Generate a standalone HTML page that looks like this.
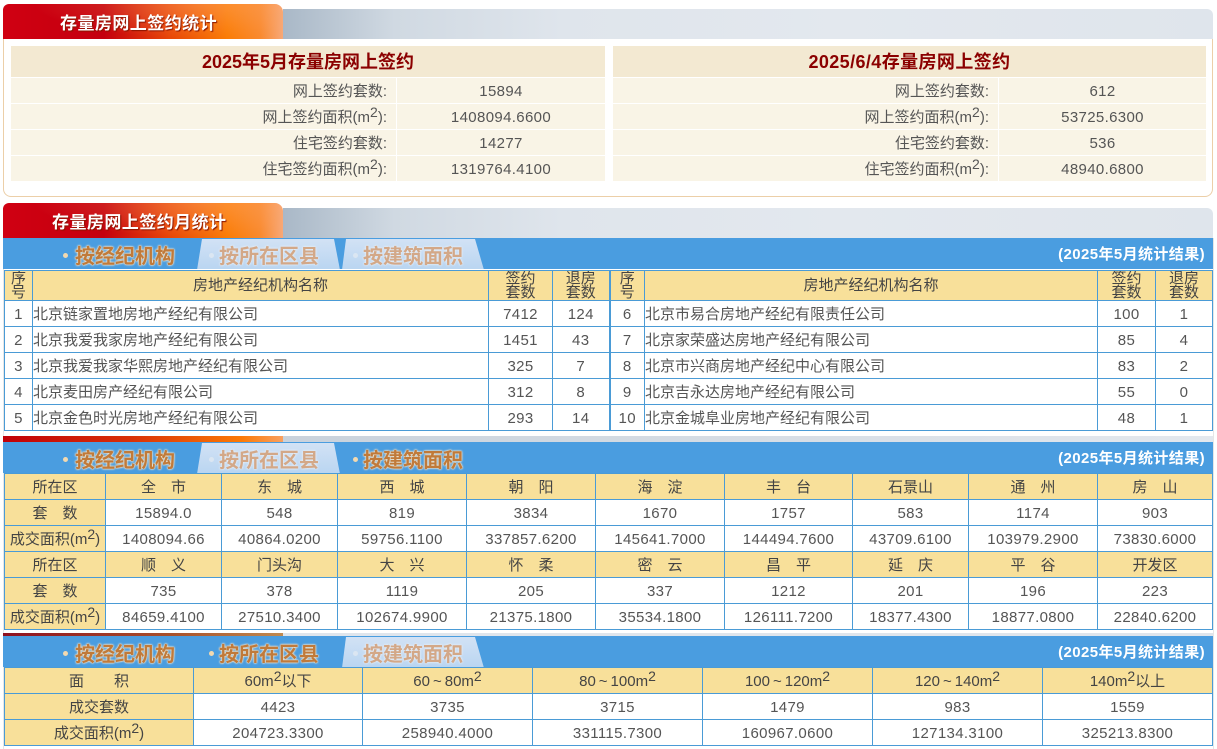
<!DOCTYPE html>
<html lang="zh"><head><meta charset="utf-8"><title>存量房网上签约统计</title>
<style>
html,body{margin:0;padding:0;background:#fff;}
body{width:1217px;height:749px;position:relative;overflow:hidden;font-family:"Liberation Sans","Noto Sans CJK SC",sans-serif;font-size:15px;color:#555;}
.a{position:absolute;}
.grey{left:283px;width:930px;background:linear-gradient(90deg,#a9b8c7 0,#d0d9e2 12%,#dfe5ec 30%,#e3e8ee 60%,#dfe5ec 100%);border-top-right-radius:6px;}
.red{left:3px;width:280px;background:radial-gradient(ellipse 170px 34px at 72% 0,rgba(255,170,110,.42),rgba(255,170,110,0)),linear-gradient(90deg,#d00012 0,#c4000e 36%,#e84808 60%,#fa7c06 80%,#f98a30 92%,#f7a878 100%);border-top-left-radius:6px;border-top-right-radius:8px;}
.h{color:#fff;font-weight:bold;font-size:17px;letter-spacing:.45px;line-height:20px;white-space:nowrap;font-family:"Noto Sans CJK SC",sans-serif;text-shadow:1px 1px 1px #8a1500;}
.box{left:3px;top:39px;width:1208px;height:157px;border:1px solid #eccfa8;border-top:0;border-radius:0 0 8px 8px;background:#fff;}
.tt{height:31px;background:#f3e9d2;text-align:center;color:#8b0000;font:bold 18px/33px "Liberation Sans","Noto Sans CJK SC",sans-serif;}
.l,.v{height:25px;line-height:27px;background:#f9f4e6;white-space:nowrap;overflow:hidden;}
.l{text-align:right;padding-right:9px;box-sizing:border-box;}
.v{text-align:center;letter-spacing:.35px;}
sup{font-size:14px;line-height:0;vertical-align:5px;}
.bar{left:3px;width:1210px;height:31px;background:#4a9de0;}
.tab{top:1px;height:30px;}
.tab polygon{fill:url(#g);}
.tx{top:1px;line-height:32px;font-weight:bold;font-size:20px;white-space:nowrap;color:#c07a3a;font-family:"Noto Sans CJK SC",sans-serif;text-shadow:0 0 2px #f3e4cc,0 0 2px #f3e4cc,0 0 1px #f3e4cc;}
.f{color:#d3a888;text-shadow:0 0 2px #e7eef6,0 0 2px #e7eef6;}
.dot{top:15px;width:5px;height:5px;border-radius:50%;background:#f2d9b0;}
.d2{background:#dbe6f2;}
.res{right:8px;top:0;color:#fff;font:bold 15px/33px "Liberation Sans","Noto Sans CJK SC",sans-serif;letter-spacing:.4px;white-space:nowrap;}
table{position:absolute;border-collapse:collapse;table-layout:fixed;background:#fff;}
td{border:1px solid #4a9bd6;padding:2px 0 0;text-align:center;height:23px;line-height:22px;letter-spacing:.35px;white-space:nowrap;overflow:hidden;}
table.t3 tr:nth-child(-n+3) td{padding-top:3px;height:22px;}
tr.y td,td.y{background:#f8e09a;color:#444;letter-spacing:0;}
td.n{text-align:left;letter-spacing:0;}
tr.hh td{line-height:14px;height:29px;padding:0;}
td.m{border-right:2px solid #4a9bd6;}
.vl{width:1px;background:#e6e6e6;top:238px;height:511px;}
</style></head><body>
<svg width="0" height="0" style="position:absolute"><defs><linearGradient id="g" x1="0" y1="0" x2="0" y2="1"><stop offset="0" stop-color="#d2e2f5"/><stop offset="1" stop-color="#b9d5f1"/></linearGradient></defs></svg>

<div class="a grey" style="top:9px;height:30px"></div>
<div class="a red" style="top:4px;height:35px"></div>
<div class="a h" style="left:60px;top:12px">存量房网上签约统计</div>
<div class="a box"></div>

<div class="a tt" style="left:11px;top:46px;width:594px">2025年5月存量房网上签约</div>
<div class="a l" style="left:11px;top:78px;width:385px">网上签约套数:</div><div class="a v" style="left:397px;top:78px;width:208px">15894</div>
<div class="a l" style="left:11px;top:104px;width:385px">网上签约面积(m<sup>2</sup>):</div><div class="a v" style="left:397px;top:104px;width:208px">1408094.6600</div>
<div class="a l" style="left:11px;top:130px;width:385px">住宅签约套数:</div><div class="a v" style="left:397px;top:130px;width:208px">14277</div>
<div class="a l" style="left:11px;top:156px;width:385px">住宅签约面积(m<sup>2</sup>):</div><div class="a v" style="left:397px;top:156px;width:208px">1319764.4100</div>

<div class="a tt" style="left:613px;top:46px;width:593px;letter-spacing:.4px">2025/6/4存量房网上签约</div>
<div class="a l" style="left:613px;top:78px;width:385px">网上签约套数:</div><div class="a v" style="left:999px;top:78px;width:207px">612</div>
<div class="a l" style="left:613px;top:104px;width:385px">网上签约面积(m<sup>2</sup>):</div><div class="a v" style="left:999px;top:104px;width:207px">53725.6300</div>
<div class="a l" style="left:613px;top:130px;width:385px">住宅签约套数:</div><div class="a v" style="left:999px;top:130px;width:207px">536</div>
<div class="a l" style="left:613px;top:156px;width:385px">住宅签约面积(m<sup>2</sup>):</div><div class="a v" style="left:999px;top:156px;width:207px">48940.6800</div>

<div class="a vl" style="left:3px"></div><div class="a vl" style="left:1213px"></div>

<div class="a grey" style="top:208px;height:30px"></div>
<div class="a red" style="top:203px;height:35px"></div>
<div class="a h" style="left:52px;top:211px">存量房网上签约月统计</div>

<div class="a bar" style="top:238px">
<svg class="a tab" style="left:194px" width="146" height="31"><polygon points="0,31 5,0 137,0 143,31"/></svg>
<svg class="a tab" style="left:339px" width="146" height="31"><polygon points="0,31 4,0 133,0 142,31"/></svg>
<div class="a dot" style="left:60px"></div><div class="a tx" style="left:72px">按经纪机构</div>
<div class="a dot d2" style="left:206px"></div><div class="a tx f" style="left:216px">按所在区县</div>
<div class="a dot d2" style="left:350px"></div><div class="a tx f" style="left:360px">按建筑面积</div>
<div class="a res">(2025年5月统计结果)</div></div>

<table style="left:4px;top:270px;width:1208px">
<colgroup><col style="width:28px"><col style="width:456px"><col style="width:64px"><col style="width:57px"><col style="width:35px"><col style="width:453px"><col style="width:58px"><col style="width:57px"></colgroup>
<tr class="y hh"><td>序<br>号</td><td>房地产经纪机构名称</td><td>签约<br>套数</td><td class="m">退房<br>套数</td><td>序<br>号</td><td>房地产经纪机构名称</td><td>签约<br>套数</td><td>退房<br>套数</td></tr>
<tr><td>1</td><td class="n">北京链家置地房地产经纪有限公司</td><td>7412</td><td class="m">124</td><td>6</td><td class="n">北京市易合房地产经纪有限责任公司</td><td>100</td><td>1</td></tr>
<tr><td>2</td><td class="n">北京我爱我家房地产经纪有限公司</td><td>1451</td><td class="m">43</td><td>7</td><td class="n">北京家荣盛达房地产经纪有限公司</td><td>85</td><td>4</td></tr>
<tr><td>3</td><td class="n">北京我爱我家华熙房地产经纪有限公司</td><td>325</td><td class="m">7</td><td>8</td><td class="n">北京市兴商房地产经纪中心有限公司</td><td>83</td><td>2</td></tr>
<tr><td>4</td><td class="n">北京麦田房产经纪有限公司</td><td>312</td><td class="m">8</td><td>9</td><td class="n">北京吉永达房地产经纪有限公司</td><td>55</td><td>0</td></tr>
<tr><td>5</td><td class="n">北京金色时光房地产经纪有限公司</td><td>293</td><td class="m">14</td><td>10</td><td class="n">北京金城阜业房地产经纪有限公司</td><td>48</td><td>1</td></tr>
</table>

<div class="a" style="left:3px;top:436px;width:280px;height:6px;background:linear-gradient(90deg,#c00008 0,#d83008 45%,#fb7a06 85%,#f9a060 100%)"></div>
<div class="a" style="left:283px;top:436px;width:930px;height:6px;background:linear-gradient(90deg,#c9d2dc,#e3e8ee)"></div>
<div class="a bar" style="top:442px">
<svg class="a tab" style="left:194px" width="146" height="31"><polygon points="0,31 5,0 137,0 143,31"/></svg>
<div class="a dot" style="left:60px"></div><div class="a tx" style="left:72px">按经纪机构</div>
<div class="a dot d2" style="left:206px"></div><div class="a tx f" style="left:216px">按所在区县</div>
<div class="a dot" style="left:350px"></div><div class="a tx" style="left:360px">按建筑面积</div>
<div class="a res">(2025年5月统计结果)</div></div>

<table class="t3" style="left:4px;top:473px;width:1208px">
<colgroup><col style="width:101px"><col style="width:116px"><col style="width:116px"><col style="width:129px"><col style="width:129px"><col style="width:129px"><col style="width:128px"><col style="width:116px"><col style="width:129px"><col style="width:115px"></colgroup>
<tr class="y"><td>所在区</td><td>全&emsp;市</td><td>东&emsp;城</td><td>西&emsp;城</td><td>朝&emsp;阳</td><td>海&emsp;淀</td><td>丰&emsp;台</td><td>石景山</td><td>通&emsp;州</td><td>房&emsp;山</td></tr>
<tr><td class="y">套&emsp;数</td><td>15894.0</td><td>548</td><td>819</td><td>3834</td><td>1670</td><td>1757</td><td>583</td><td>1174</td><td>903</td></tr>
<tr><td class="y">成交面积(m<sup>2</sup>)</td><td>1408094.66</td><td>40864.0200</td><td>59756.1100</td><td>337857.6200</td><td>145641.7000</td><td>144494.7600</td><td>43709.6100</td><td>103979.2900</td><td>73830.6000</td></tr>
<tr class="y"><td>所在区</td><td>顺&emsp;义</td><td>门头沟</td><td>大&emsp;兴</td><td>怀&emsp;柔</td><td>密&emsp;云</td><td>昌&emsp;平</td><td>延&emsp;庆</td><td>平&emsp;谷</td><td>开发区</td></tr>
<tr><td class="y">套&emsp;数</td><td>735</td><td>378</td><td>1119</td><td>205</td><td>337</td><td>1212</td><td>201</td><td>196</td><td>223</td></tr>
<tr><td class="y">成交面积(m<sup>2</sup>)</td><td>84659.4100</td><td>27510.3400</td><td>102674.9900</td><td>21375.1800</td><td>35534.1800</td><td>126111.7200</td><td>18377.4300</td><td>18877.0800</td><td>22840.6200</td></tr>
</table>

<div class="a" style="left:3px;top:633px;width:280px;height:3px;background:linear-gradient(90deg,#8e1020,#a8502a 60%,#c08a50)"></div>
<div class="a" style="left:283px;top:633px;width:930px;height:3px;background:#dfe5ec"></div>
<div class="a bar" style="top:636px">
<svg class="a tab" style="left:339px" width="146" height="31"><polygon points="0,31 4,0 133,0 142,31"/></svg>
<div class="a dot" style="left:60px"></div><div class="a tx" style="left:72px">按经纪机构</div>
<div class="a dot" style="left:206px"></div><div class="a tx" style="left:216px">按所在区县</div>
<div class="a dot d2" style="left:350px"></div><div class="a tx f" style="left:360px">按建筑面积</div>
<div class="a res">(2025年5月统计结果)</div></div>

<table style="left:4px;top:667px;width:1208px">
<colgroup><col style="width:189px"><col style="width:169px"><col style="width:170px"><col style="width:170px"><col style="width:170px"><col style="width:170px"><col style="width:170px"></colgroup>
<tr class="y"><td>面&emsp;&emsp;积</td><td>60m<sup>2</sup>以下</td><td>60&thinsp;~&thinsp;80m<sup>2</sup></td><td>80&thinsp;~&thinsp;100m<sup>2</sup></td><td>100&thinsp;~&thinsp;120m<sup>2</sup></td><td>120&thinsp;~&thinsp;140m<sup>2</sup></td><td>140m<sup>2</sup>以上</td></tr>
<tr><td class="y">成交套数</td><td>4423</td><td>3735</td><td>3715</td><td>1479</td><td>983</td><td>1559</td></tr>
<tr><td class="y">成交面积(m<sup>2</sup>)</td><td>204723.3300</td><td>258940.4000</td><td>331115.7300</td><td>160967.0600</td><td>127134.3100</td><td>325213.8300</td></tr>
</table>
</body></html>
